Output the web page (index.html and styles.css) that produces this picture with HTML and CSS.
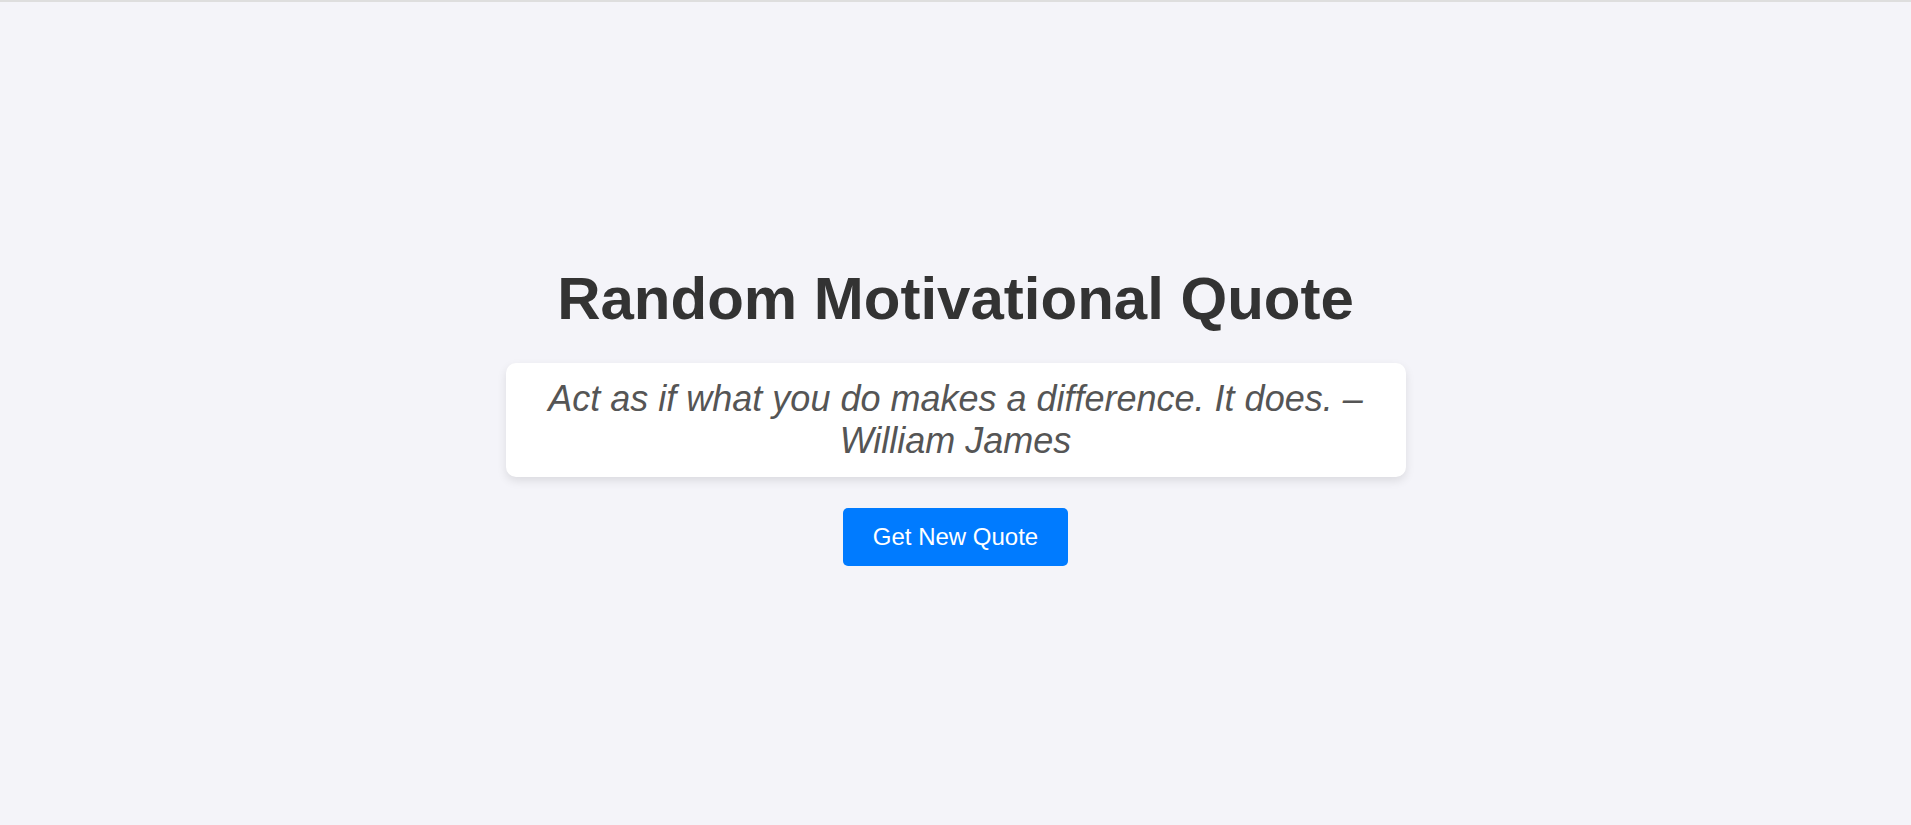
FILE: index.html
```html
<!DOCTYPE html>
<html lang="en">
<head>
<meta charset="UTF-8">
<title>Random Motivational Quote</title>
<link rel="stylesheet" href="styles.css">
</head>
<body>
<main class="container">
  <h1 class="title">Random Motivational Quote</h1>
  <p class="quote">Act as if what you do makes a difference. It does. – William James</p>
  <button class="btn" type="button">Get New Quote</button>
</main>
</body>
</html>
```

FILE: styles.css
```css
html, body {
  margin: 0;
  padding: 0;
}

body {
  background: #f4f4f9;
  border-top: 2px solid #dedede;
  font-family: "Liberation Sans", Arial, sans-serif;
  min-height: calc(100vh - 2px);
  display: flex;
  align-items: center;
  justify-content: center;
}

.container {
  display: flex;
  flex-direction: column;
  align-items: center;
  padding-top: 3px;
}

.title {
  margin: 0;
  font-size: 60px;
  font-weight: bold;
  color: #333;
  line-height: normal;
}

.quote {
  margin: 30px 0 31px;
  width: 860px;
  padding: 15px 20px;
  background: #fff;
  border-radius: 10px;
  box-shadow: 0 4px 10px rgba(0, 0, 0, 0.1);
  font-size: 36px;
  font-style: italic;
  color: #555;
  text-align: center;
  line-height: normal;
}

.btn {
  font-family: "Liberation Sans", Arial, sans-serif;
  font-size: 24px;
  line-height: normal;
  color: #fff;
  background: #007bff;
  border: none;
  border-radius: 5px;
  padding: 15px 30px;
  cursor: pointer;
}
```
